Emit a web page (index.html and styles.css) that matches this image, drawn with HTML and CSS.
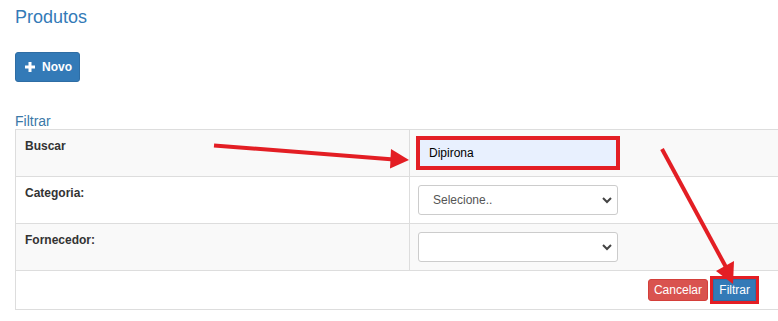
FILE: index.html
```html
<!DOCTYPE html>
<html lang="pt-BR">
<head>
    <meta charset="UTF-8">
    <meta name="viewport" content="width=device-width, initial-scale=1.0">
    <title>Produtos</title>
    <link rel="stylesheet" href="styles.css">
</head>
<body>
    <div class="page">
        <h1 class="title">Produtos</h1>

        <button class="btn btn-primary btn-new">
            <svg class="icon-plus" width="10" height="10" viewBox="0 0 10 10"><path d="M3.5 0h3v3.5H10v3H6.5V10h-3V6.5H0v-3h3.5z" fill="#fff"/></svg>
            Novo
        </button>

        <form class="filter">
            <table class="filter-table">
                <caption>Filtrar</caption>
                <colgroup>
                    <col class="col-label">
                    <col>
                </colgroup>
                <tr class="striped">
                    <th>Buscar</th>
                    <td><input type="text" class="field field-search" value="Dipirona"></td>
                </tr>
                <tr>
                    <th>Categoria:</th>
                    <td>
                        <select class="field">
                            <option>Selecione..</option>
                        </select>
                    </td>
                </tr>
                <tr class="striped">
                    <th>Fornecedor:</th>
                    <td>
                        <select class="field">
                            <option></option>
                        </select>
                    </td>
                </tr>
                <tr>
                    <td colspan="2" class="actions">
                        <button type="button" class="btn btn-danger">Cancelar</button>
                        <button type="submit" class="btn btn-primary btn-marked">Filtrar</button>
                    </td>
                </tr>
            </table>
        </form>

        <!-- annotation arrows drawn over the screenshot -->
        <svg class="arrows" width="778" height="321" viewBox="0 0 778 321">
            <line x1="214" y1="138.5" x2="394" y2="152.5" stroke="#e31e24" stroke-width="4"/>
            <polygon points="391,142 409,153 390,161.5" fill="#e31e24"/>
            <line x1="662" y1="142" x2="727" y2="262" stroke="#e31e24" stroke-width="4"/>
            <polygon points="716,264 734,254 733,277" fill="#e31e24"/>
        </svg>
    </div>
</body>
</html>
```

FILE: styles.css
```css
html, body { overflow: hidden; }
body { margin: 0; font-family: "Liberation Sans", Arial, sans-serif; font-size: 12px; color: #333; background: #fff; }
.page { position: relative; padding: 0 15px; height: 321px; }

.title { margin: 7px 0 0; font-size: 18px; line-height: 20px; font-weight: normal; color: #337ab7; }

.btn { font-family: inherit; font-size: 12px; color: #fff; border: 1px solid transparent; border-radius: 3px; cursor: pointer; }
.btn-primary { background-color: #337ab7; border-color: #2e6da4; }
.btn-danger { background-color: #d9534f; border-color: #d43f3a; }
.btn-new { display: flex; align-items: center; gap: 7px; margin-top: 25px; height: 30px; width: 65px; padding: 0 9px; font-weight: bold; }
.icon-plus { flex: none; }

.filter { margin-top: 31px; }
.filter-table { width: 790px; border-collapse: collapse; table-layout: fixed; border: 1px solid #ddd; }
.filter-table caption { text-align: left; font-size: 14px; line-height: 16px; color: #3a78a8; padding: 0; }
.col-label { width: 394px; }
.filter-table th, .filter-table td { border: 1px solid #ddd; padding: 8px 9px; line-height: 17px; vertical-align: top; text-align: left; }
.filter-table th { font-weight: bold; color: #333; }
.filter-table td { padding-left: 8px; }
.striped th, .striped td { background-color: #f9f9f9; }

.field { display: block; box-sizing: border-box; width: 200px; height: 30px; padding: 0 12px; font-family: inherit; font-size: 12px; color: #555; background: #fff; border: 1px solid #ccc; border-radius: 3px; }
select.field { appearance: none; padding-left: 14px; background: #fff url("data:image/svg+xml,%3Csvg xmlns='http://www.w3.org/2000/svg' width='10' height='7' viewBox='0 0 10 7'%3E%3Cpath d='M1 1l4 4 4-4' fill='none' stroke='%23444' stroke-width='2'/%3E%3C/svg%3E") no-repeat right 5px center; }
.field-search { padding-left: 10px; color: #000; background-color: #e8f0fe; border-radius: 0; outline: 4px solid #e31e24; outline-offset: -2px; }

.filter-table td.actions { padding: 8px 48px 8px 8px; text-align: right; }
.actions .btn { height: 22px; padding: 0 5px; line-height: 20px; margin-left: 2px; }
.btn-marked { border-radius: 0; outline: 3px solid #e31e24; }

.arrows { position: absolute; top: 0; left: 0; pointer-events: none; }
```
